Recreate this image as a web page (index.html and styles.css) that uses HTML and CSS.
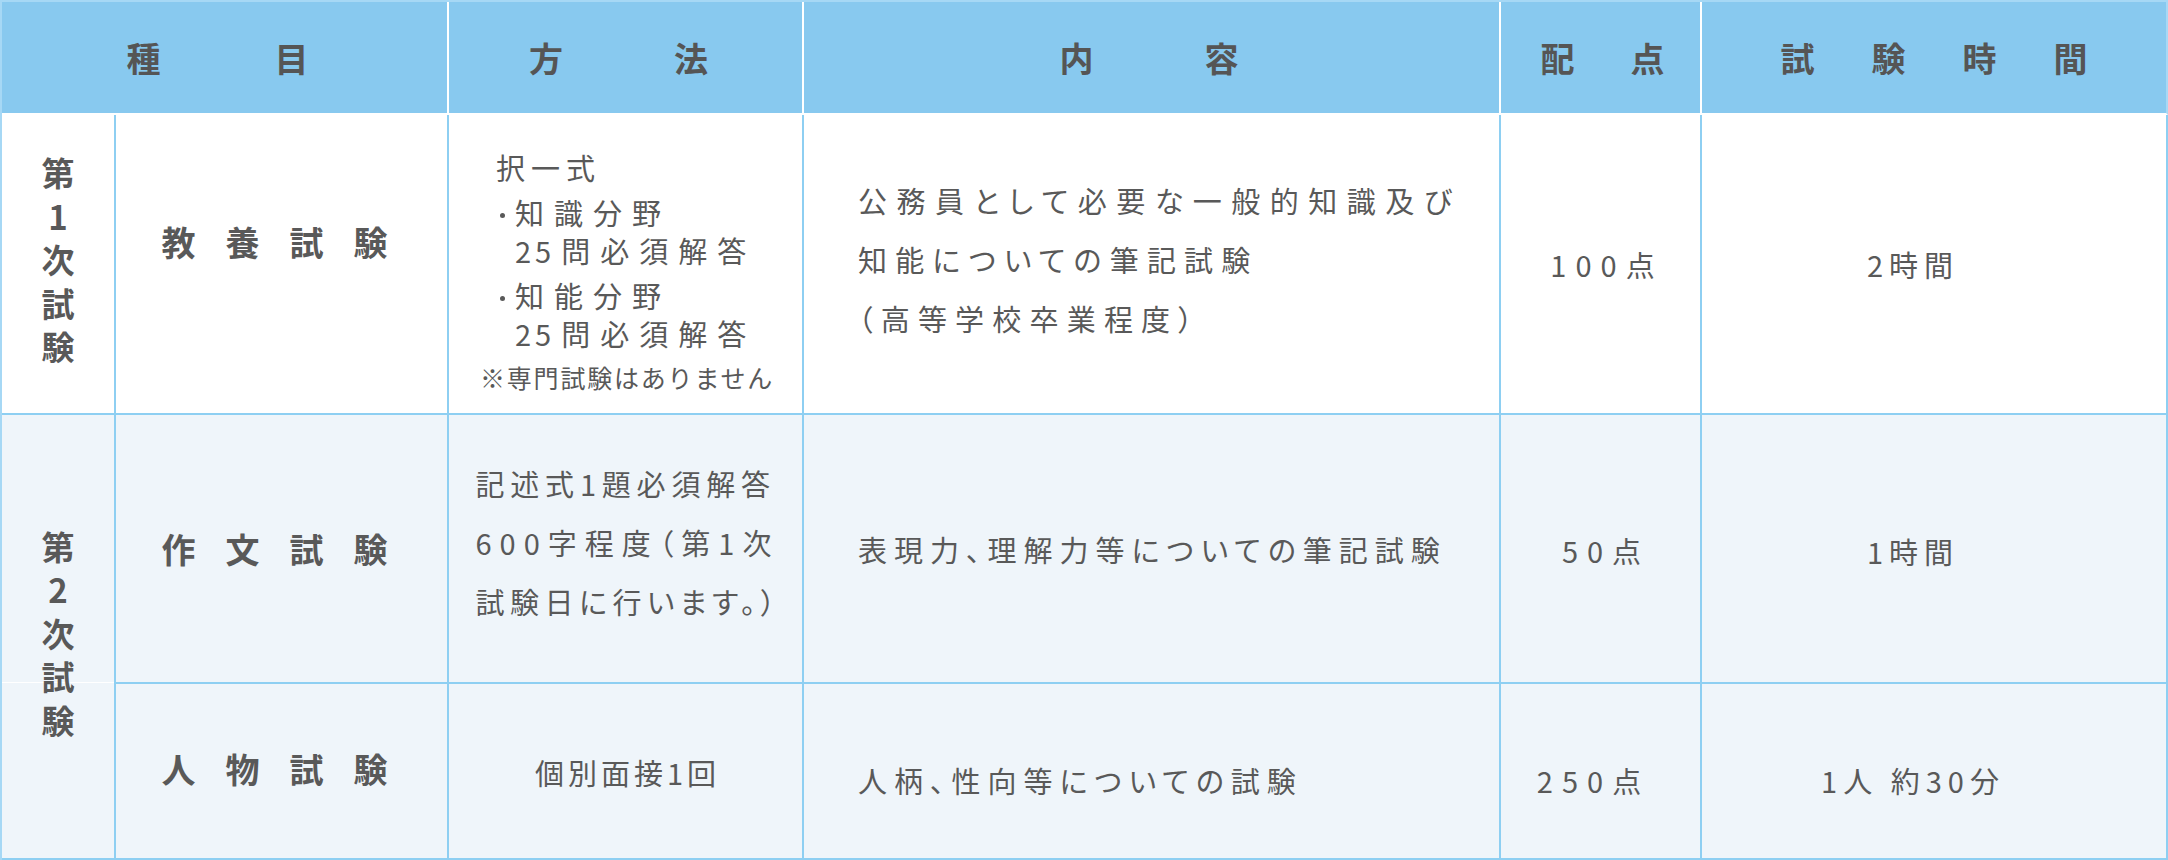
FILE: index.html
```html
<!DOCTYPE html>
<html lang="ja">
<head>
<meta charset="utf-8">
<title>試験内容</title>
<link rel="stylesheet" href="styles.css">
</head>
<body>
<div class="exam">
  <div class="th th-kind"><span>種</span><span>目</span></div>
  <div class="th th-method"><span>方</span><span>法</span></div>
  <div class="th th-content"><span>内</span><span>容</span></div>
  <div class="th th-score"><span>配</span><span>点</span></div>
  <div class="th th-time last"><span>試</span><span>験</span><span>時</span><span>間</span></div>

  <div class="td stage s1"><span>第</span><span>1</span><span>次</span><span>試</span><span>験</span></div>
  <div class="td name n1"><span>教</span><span>養</span><span>試</span><span>験</span></div>
  <div class="td method m1">
    <div class="mblock">
      <p class="ml l-first">択一式</p>
      <p class="ml l-item"><i class="dot"></i>知識分野</p>
      <p class="ml l-sub"><span class="num">25</span>問必須解答</p>
      <p class="ml l-item"><i class="dot"></i>知能分野</p>
      <p class="ml l-sub"><span class="num">25</span>問必須解答</p>
      <p class="ml l-note">※専門試験はありません</p>
    </div>
  </div>
  <div class="td content c1">
    <div class="cblock">
      <p class="cl1">公務員として必要な一般的知識及び</p>
      <p class="cl2">知能についての筆記試験</p>
      <p class="cl2">（高等学校卒業程度）</p>
    </div>
  </div>
  <div class="td score r1">100点</div>
  <div class="td time r1 last">2時間</div>

  <div class="td stage s2 alt"><span>第</span><span>2</span><span>次</span><span>試</span><span>験</span></div>
  <div class="td name n2 alt"><span>作</span><span>文</span><span>試</span><span>験</span></div>
  <div class="td method m2 alt">
    <div class="jblock">
      <p class="j1">記述式1題必須解答</p>
      <p class="j2">600字程度（第1次</p>
      <p class="j3">試験日に行います。）</p>
    </div>
  </div>
  <div class="td content c2 alt"><p>表現力、理解力等についての筆記試験</p></div>
  <div class="td score r2 alt">50点</div>
  <div class="td time r2 alt last">1時間</div>

  <div class="td name n3 alt"><span>人</span><span>物</span><span>試</span><span>験</span></div>
  <div class="td method m3 alt">個別面接1回</div>
  <div class="td content c3 alt"><p>人柄、性向等についての試験</p></div>
  <div class="td score r3 alt">250点</div>
  <div class="td time r3 alt last">1人 約30分</div>
</div>
</body>
</html>
```

FILE: styles.css
```css
html, body {
  margin: 0;
  padding: 0;
  background: #ffffff;
}

.exam {
  display: grid;
  grid-template-columns: 114px 333px 355px 697px 201px 466px;
  grid-template-rows: 113px 300px 269px 176px;
  width: 2168px;
  box-sizing: border-box;
  border-left: 2px solid #a6d8f5;
  border-top: 2px solid #a6d8f5;
  font-family: "Noto Sans CJK JP", "Noto Sans", sans-serif;
  color: #595959;
}

.exam p {
  margin: 0;
}

/* header */
.th {
  background: #88c9ef;
  border-right: 2px solid #ffffff;
  border-bottom: 2px solid #ffffff;
  display: flex;
  align-items: center;
  justify-content: center;
  font-size: 34px;
  font-weight: 700;
  line-height: 1;
  color: #555555;
}
.th.last {
  border-right-color: #a6d8f5;
}
.th-kind {
  grid-column: 1 / 3;
  gap: 114px;
  padding-right: 14px;
}
.th-method {
  gap: 111px;
  padding-right: 14px;
}
.th-content {
  gap: 111px;
  padding-right: 5px;
}
.th-score {
  gap: 56px;
  padding-left: 4px;
}
.th-time {
  gap: 57px;
}

/* body cells */
.td {
  border-right: 2px solid #8ecff2;
  border-bottom: 2px solid #8ecff2;
  display: flex;
  align-items: center;
  justify-content: center;
  font-size: 29px;
  background: #ffffff;
}
.td.alt {
  background: #eff5fa;
}

.stage {
  flex-direction: column;
  font-size: 33px;
  font-weight: 700;
  line-height: 43.5px;
}
.s1 {
  padding-bottom: 8px;
}
.s2 {
  grid-row: 3 / 5;
  padding-bottom: 6px;
  background: linear-gradient(to bottom, #eff5fa 0, #eff5fa 267px, #ffffff 267px, #ffffff 268px, #eff5fa 268px) !important;
}

.name {
  font-size: 34px;
  font-weight: 700;
  line-height: 1;
  gap: 30px;
  padding-right: 14px;
}
.n1 {
  padding-bottom: 44px;
}
.n3 {
  padding-bottom: 4px;
}

/* method */
.m1 {
  justify-content: flex-start;
  padding-left: 31px;
  padding-top: 16px;
}
.ml {
  line-height: 38px;
  letter-spacing: 10px;
  white-space: nowrap;
}
.l-first {
  padding-left: 16px;
  letter-spacing: 6px;
}
.l-item {
  margin-top: 7px !important;
  padding-left: 20px;
  letter-spacing: 10px;
}
.l-sub {
  padding-left: 35px;
}
.num {
  letter-spacing: 4px;
}
.num::after {
  content: "";
  margin-right: 6px;
}
.l-note {
  margin-top: 6px !important;
  font-size: 25px;
  letter-spacing: 1.8px;
}
.dot {
  display: inline-block;
  width: 5px;
  height: 5px;
  border-radius: 50%;
  background: #595959;
  margin-right: 10px;
  vertical-align: middle;
  position: relative;
  top: -2px;
}

.m2 {
  padding-bottom: 13px;
}
.jblock {
  width: 300px;
  font-feature-settings: "palt";
}
.jblock p {
  line-height: 59px;
  white-space: nowrap;
}
.j1 {
  letter-spacing: 5.5px;
  text-align: justify;
  text-align-last: justify;
}
.j2 {
  letter-spacing: 8px;
  text-align: justify;
  text-align-last: justify;
}
.j3 {
  letter-spacing: 5.5px;
}

.m3 {
  letter-spacing: 4px;
  padding-left: 4px;
  padding-top: 2px;
}

/* content */
.content {
  justify-content: flex-start;
  padding-left: 54px;
  font-feature-settings: "palt";
  white-space: nowrap;
}
.cblock p {
  line-height: 59px;
}
.cl1 {
  letter-spacing: 9.5px;
}
.cl2 {
  letter-spacing: 8.2px;
}
.c1 {
  padding-bottom: 10px;
}
.c2 p,
.c3 p {
  letter-spacing: 7px;
}
.c3 {
  padding-top: 18px;
}

/* score */
.score {
  letter-spacing: 9px;
  padding-left: 9px;
}
.r1.score {
  padding-left: 13px;
}
.r3.score {
  padding-left: 0;
  padding-right: 14px;
  padding-top: 18px;
}
.r2.score {
  padding-left: 11px;
  padding-top: 3px;
}

/* time */
.time {
  letter-spacing: 6px;
  padding-right: 42px;
}
.r2.time {
  padding-top: 4px;
}
.r3.time {
  padding-top: 18px;
}
```
